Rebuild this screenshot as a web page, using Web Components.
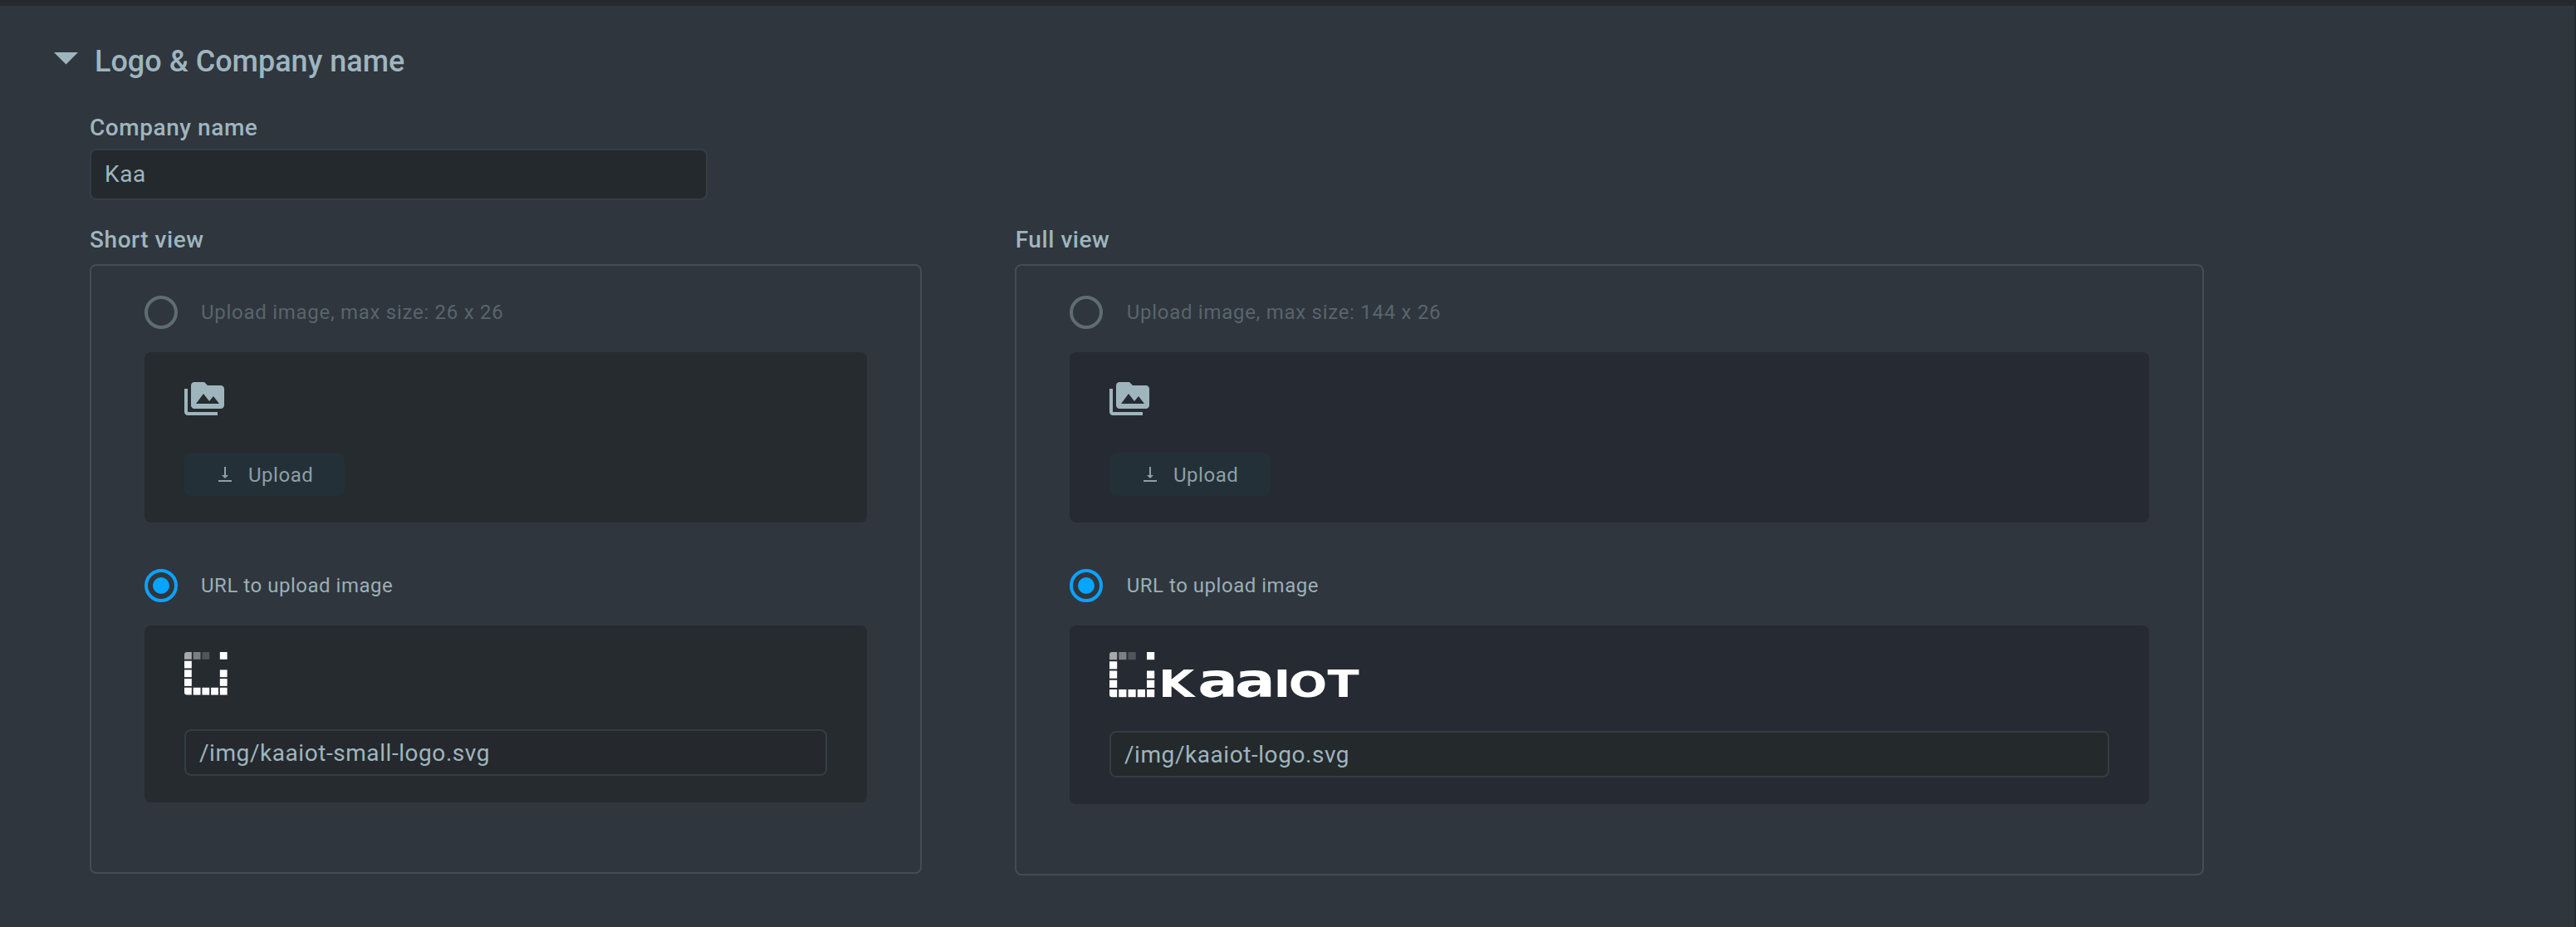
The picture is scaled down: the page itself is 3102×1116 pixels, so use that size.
<!DOCTYPE html>
<html lang="en">
<head>
<meta charset="utf-8">
<title>Logo &amp; Company name</title>
<style>
  html, body { margin: 0; height: 100%; }
  body { background: #2f363e; color: #9fb5be; font-family: Roboto, "Liberation Sans", sans-serif; overflow: hidden; }
</style>
</head>
<body>
<settings-section heading="Logo &amp; Company name">
  <labeled-field label="Company name">
    <text-box class="company">Kaa</text-box>
  </labeled-field>
  <div slot="views" class="views">
    <logo-view label="Short view" size="26 x 26" url="/img/kaaiot-small-logo.svg"
      style="width:1002px;--panel:#252b2e;--box:#25292d">
      <kaa-mark></kaa-mark>
    </logo-view>
    <logo-view label="Full view" size="144 x 26" url="/img/kaaiot-logo.svg"
      style="width:1432px;--panel:#262a32;--box:#24292c;--nudge:.7px">
      <kaa-wordmark></kaa-wordmark>
    </logo-view>
  </div>
</settings-section>

<script>
  const define = (name, html) => {
    customElements.define(name, class extends HTMLElement {
      constructor() {
        super();
        const t = document.createElement('template');
        t.innerHTML = typeof html === 'function' ? html(k => this.getAttribute(k) || '') : html;
        this.attachShadow({ mode: 'open' }).append(t.content.cloneNode(true));
      }
    });
  };

  const esc = s => s.replace(/&/g, '&amp;').replace(/</g, '&lt;');

  // Border of squares shared by the small and the full logo.
  const squares = (pitch, size) => {
    const cells = [[0,0,.6],[1,0,.4],[2,0,.2],[4,0,1],[0,1,1],[0,2,1],[4,2,1],[0,3,1],[4,3,1],
                   [0,4,1],[1,4,1],[2,4,1],[3,4,1],[4,4,1]];
    return cells.map(([c, r, o]) => {
      const x = c * pitch, y = r * pitch, s = size;
      if (c === 0 && r === 0)
        return `<path opacity="${o}" d="M${x + 3} ${y}h${s - 3}v${s}h${-s}v${3 - s}q0-3 3-3z"/>`;
      if (c === 0 && r === 4)
        return `<path d="M${x} ${y}h${s}v${s}h${3 - s}q-3 0-3-3z"/>`;
      return `<rect x="${x}" y="${y}" width="${s}" height="${s}" opacity="${o}"/>`;
    }).join('');
  };

  define('settings-section', a => `
    <style>
      :host { display: flex; flex-direction: column; box-sizing: border-box; height: 1116px;
              border-top: 7px solid #252a2e; border-right: 2px solid #262b30; }
      header { display: flex; align-items: flex-start; padding: 46px 0 0 65px; height: 42px; gap: 20px; }
      header svg { margin-top: 10px; fill: #9fb5be; }
      h2 { margin: 0; font-size: 36px; line-height: 42px; font-weight: 500; }
      main { display: flex; flex-direction: column; padding: 41px 0 0 108px; }
      ::slotted(.views) { display: flex; gap: 112px; margin-top: 30px; }
    </style>
    <header>
      <svg width="29" height="15" viewBox="0 0 29 15"><path d="M0 0h29L14.5 14.5z"/></svg>
      <h2>${esc(a('heading'))}</h2>
    </header>
    <main><slot></slot><slot name="views"></slot></main>`);

  define('labeled-field', a => `
    <style>
      :host { display: flex; flex-direction: column; }
      label { font-size: 28px; line-height: 36px; font-weight: 500; letter-spacing: .56px; margin-bottom: 7px; }
      ::slotted(.company) { width: 744px; height: 62px; padding-bottom: 2px; --box: #24292d; --edge: #353e46; }
    </style>
    <label>${esc(a('label'))}</label><slot></slot>`);

  define('text-box', `
    <style>
      :host { display: flex; align-items: center; box-sizing: border-box; height: 56px; padding: 0 16px;
              border: 2px solid var(--edge, #353d43); border-radius: 8px; background: var(--box);
              font-size: 28px; letter-spacing: .56px; white-space: nowrap; }
    </style><slot></slot>`);

  define('radio-option', a => `
    <style>
      :host { display: flex; align-items: center; height: 40px; gap: 28px; font-size: 24px;
              letter-spacing: .72px; color: #59656c; }
      span { padding-left: var(--nudge, 0); }
      i { box-sizing: border-box; width: 40px; height: 40px; border-radius: 50%; border: 4px solid #5f6c72;
          display: grid; place-items: center; }
      :host([checked]) { color: #9bafb7; letter-spacing: .52px; }
      :host([checked]) i { border-color: #0ca2fa; }
      :host([checked]) i::after { content: ""; width: 20px; height: 20px; border-radius: 50%; background: #06a5ff; }
    </style>
    <i></i><span><slot></slot></span>`);

  define('upload-button', `
    <style>
      :host { display: flex; align-items: center; box-sizing: border-box; width: 193px; height: 52px;
              padding-left: 41px; gap: 20px; border-radius: 8px; background: #233038; color: #8e9fa6;
              font-size: 24px; letter-spacing: .52px; }
      svg { fill: currentColor; }
      span { padding-top: 2px; }
    </style>
    <svg width="16" height="18" viewBox="0 0 16 18"><path d="M7 0h2v10h3l-4 4-4-4h3zM0 16h16v2H0z"/></svg>
    <span>Upload</span>`);

  define('kaa-mark', `
    <style>:host { display: block; height: 52px; } svg { display: block; fill: #fff; }</style>
    <svg width="52" height="52" viewBox="0 0 52 52">${squares(10.7, 8.8)}</svg>`);

  define('kaa-wordmark', `
    <style>:host { display: block; height: 54px; }
      svg { display: block; fill: #fff; overflow: visible; }
      text { font-family: "DejaVu Sans", sans-serif; font-weight: 700; font-size: 44px; }
      .a { font-size: 57px; }
      .o { font-size: 43px; }
    </style>
    <svg width="304" height="54" viewBox="0 0 304 54">${squares(11.25, 9.2)}
      <text transform="scale(1.27 1)" y="54"><tspan x="46.4">K</tspan><tspan class="a" x="83.6">a</tspan><tspan class="a" x="118.9">a</tspan><tspan x="155.5">I</tspan><tspan class="o" x="169.9">O</tspan><tspan x="206.8">T</tspan></text>
    </svg>`);

  define('logo-view', a => `
    <style>
      :host { display: flex; flex-direction: column; }
      label { font-size: 28px; line-height: 36px; font-weight: 500; letter-spacing: .56px; margin-bottom: 11px;
              padding-left: var(--nudge, 0); }
      .frame { display: flex; flex-direction: column; border: 2px solid #454c54; border-radius: 8px; padding: 36px 64px 84px; }
      .panel { display: flex; flex-direction: column; gap: 41px; margin-top: 28px; padding: 32px 48px;
               border-radius: 8px; background: var(--panel); }
      .panel + radio-option { margin-top: 56px; }
      .media { display: block; fill: #9fb5be; }
    </style>
    <label>${esc(a('label'))}</label>
    <div class="frame">
      <radio-option>Upload image, max size: ${esc(a('size'))}</radio-option>
      <div class="panel">
        <svg class="media" width="48" height="48" viewBox="0 0 24 24"><path fill-rule="evenodd" d="M2 6H0v14c0 1.1.9 2 2 2h18v-2H2V6zM22 4h-8l-2-2H6c-1.100 0-1.990.9-1.990 2L4 16c0 1.100.9 2 2 2h16c1.100 0 2-.9 2-2V6c0-1.100-.9-2-2-2zM7 15l4.500-6 3.500 4.510 2.500-3.010L21 15H7z"/></svg>
        <upload-button></upload-button>
      </div>
      <radio-option checked>URL to upload image</radio-option>
      <div class="panel"><slot></slot><text-box>${esc(a('url'))}</text-box></div>
    </div>`);
</script>
</body>
</html>
